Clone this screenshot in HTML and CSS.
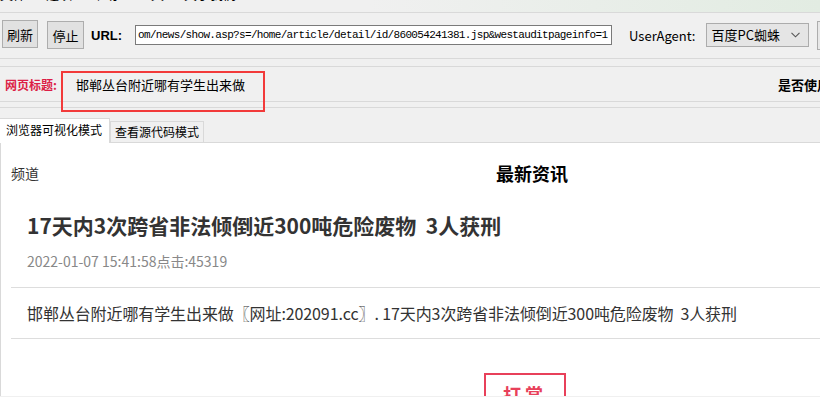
FILE: index.html
```html
<!DOCTYPE html>
<html>
<head>
    <title>网页查看</title>
    <link rel="stylesheet" href="styles.css">
</head>
<body>
    <div class="menubar">
        <span>文件</span><span>选项</span><span>帮助</span><span>工具</span><span>关于我们</span>
    </div>

    <div class="toolbar">
        <button class="btn">刷新</button>
        <button class="btn btn-stop">停止</button>
        <span class="url-label">URL:</span>
        <div class="url-box">om/news/show.asp?s=/home/article/detail/id/860054241381.jsp&amp;westauditpageinfo=1</div>
        <span class="ua-label">UserAgent:</span>
        <div class="ua-select">
            <span>百度PC蜘蛛</span>
            <svg width="9" height="6" viewBox="0 0 9 6"><path d="M0.5 0.8 L4.5 4.8 L8.5 0.8" fill="none" stroke="#555" stroke-width="1.1"/></svg>
        </div>
        <div class="btn-more"></div>
    </div>

    <div class="title-row">
        <span class="title-label">网页标题:</span>
        <span class="title-value">邯郸丛台附近哪有学生出来做</span>
        <span class="title-right">是否使用</span>
        <!-- annotation box -->
        <div class="mark"></div>
    </div>

    <div class="tabs">
        <div class="tab active">浏览器可视化模式</div>
        <div class="tab">查看源代码模式</div>
    </div>

    <div class="view">
        <div class="view-head">
            <span class="channel">频道</span>
            <span class="channel-title">最新资讯</span>
        </div>

        <div class="article">
            <h1>17天内3次跨省非法倾倒近300吨危险废物&nbsp;&nbsp;3人获刑</h1>
            <div class="meta">2022-01-07 15:41:58点击:45319</div>
        </div>

        <div class="article-body">
            <p>邯郸丛台附近哪有学生出来做〖网址:202091.cc〗. 17天内3次跨省非法倾倒近300吨危险废物&nbsp;&nbsp;3人获刑</p>
        </div>

        <div class="reward">打赏</div>
    </div>
</body>
</html>
```

FILE: styles.css
```css
body {
    margin: 0;
    width: 820px;
    height: 397px;
    overflow: hidden;
    background: #f0f0f0;
    font-family: "Noto Sans CJK SC", "Liberation Sans", sans-serif;
    font-size: 13px;
    color: #000;
}

.menubar {
    height: 12px;
    overflow: hidden;
    border-bottom: 1px solid #d9d9d9;
    background: linear-gradient(to right, #f0f0f0 45%, #e2ece2);
    display: flex;
    gap: 20px;
}

.menubar span {
    font-size: 13px;
    line-height: 18px;
    margin-top: -15px;
}

.toolbar {
    height: 45px;
    display: flex;
    align-items: center;
    border-bottom: 1px solid #d9d9d9;
    padding-left: 2px;
}

.toolbar > * {
    flex-shrink: 0;
}

.btn {
    width: 36px;
    height: 28px;
    margin: -3px 0 0;
    padding: 0;
    background: #e1e1e1;
    border: 1px solid #adadad;
    font-family: "Noto Sans CJK SC", sans-serif;
    font-size: 13px;
    color: #000;
}

.btn-stop {
    width: 37px;
    margin-left: 9px;
    margin-top: -1px;
}

.url-label {
    margin-left: 7px;
    font-family: "Liberation Sans", sans-serif;
    font-weight: bold;
    font-size: 13px;
}

.url-box {
    margin-left: 13px;
    width: 471px;
    height: 18px;
    border: 1px solid #7a7a7a;
    background: #fff;
    font-family: "Liberation Mono", monospace;
    font-size: 11px;
    letter-spacing: -0.66px;
    line-height: 18px;
    padding-left: 2px;
    padding-right: 2px;
    white-space: nowrap;
    overflow: hidden;
    margin-top: -1px;
}

.ua-label {
    margin-left: 17px;
    font-size: 13px;
}

.ua-select {
    margin-left: 11px;
    width: 103px;
    height: 24px;
    border: 1px solid #acacac;
    background: #e5e5e5;
    display: flex;
    align-items: center;
    justify-content: space-between;
    padding: 0 8px 0 4px;
    box-sizing: border-box;
    margin-top: -2px;
}

.btn-more {
    margin-left: 8px;
    width: 20px;
    height: 27px;
    border: 1px solid #adadad;
    background: #e8e8e8;
}

.title-row {
    position: relative;
    margin-top: 7px;
    border-top: 1px solid #d9d9d9;
    border-bottom: 1px solid #d9d9d9;
    height: 34px;
    display: flex;
    align-items: center;
    padding-left: 5px;
}

.title-label {
    color: #dc1e46;
    font-size: 12px;
    font-weight: bold;
}

.title-value {
    margin-left: 19px;
    font-size: 13px;
}

.title-right {
    margin-left: auto;
    margin-right: -10px;
    font-weight: bold;
    font-size: 13px;
}

.mark {
    position: absolute;
    left: 61px;
    top: 4px;
    width: 200px;
    height: 37px;
    border: 2px solid #f23a3a;
}

.tabs {
    margin-top: 5px;
    border-top: 1px solid #d9d9d9;
    height: 34px;
    display: flex;
    align-items: flex-end;
    border-bottom: 1px solid #d9d9d9;
}

.tab {
    height: 20px;
    line-height: 20px;
    padding: 0 4px;
    border: 1px solid #d9d9d9;
    border-bottom: none;
    background: #f0f0f0;
    font-size: 12px;
}

.tab.active {
    background: #fff;
    height: 24px;
    line-height: 22px;
    padding: 0 7px 0 6px;
    margin-bottom: -1px;
    border-left: none;
}

.view {
    background: #fff;
    border-left: 1px solid #d9d9d9;
    height: 253px;
    overflow: hidden;
    color: #333;
}

.view-head {
    display: flex;
    padding: 20px 0 0 10px;
    line-height: 20px;
}

.channel {
    font-size: 14px;
}

.channel-title {
    margin-left: 457px;
    font-size: 18px;
    font-weight: bold;
    color: #000;
}

.article {
    padding-left: 26px;
}

.article h1 {
    margin: 28px 0 0;
    font-size: 21px;
    line-height: 28px;
    font-weight: bold;
    color: #333;
}

.meta {
    margin-top: 12px;
    font-size: 14px;
    color: #888;
}

.article-body {
    margin: 16px 0 0 10px;
    border-top: 1px solid #ddd;
    border-bottom: 1px solid #ddd;
    height: 50px;
}

.article-body p {
    margin: 13px 0 0 16px;
    font-size: 16px;
    line-height: 24px;
    letter-spacing: -0.1px;
    color: #333;
    white-space: nowrap;
}

.reward {
    margin: 34px 0 0 483px;
    width: 78px;
    height: 40px;
    border: 2px solid #e8405a;
    color: #e8405a;
    font-size: 18px;
    font-weight: bold;
    text-align: center;
    line-height: 38px;
    letter-spacing: 4px;
}
```
